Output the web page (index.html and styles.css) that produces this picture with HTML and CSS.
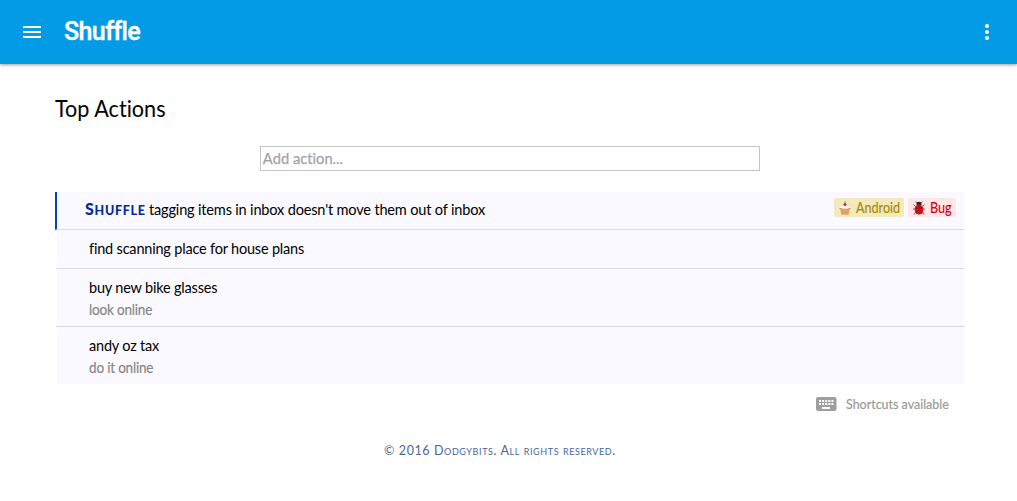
FILE: index.html
```html
<!DOCTYPE html>
<html lang="en">
<head>
<meta charset="utf-8">
<title>Shuffle</title>
<link rel="stylesheet" href="styles.css">
</head>
<body>
<header class="bar">
  <svg class="menu" width="18" height="12" viewBox="0 0 18 12" fill="#fff"><path d="M0 0h18v2H0zM0 5h18v2H0zM0 10h18v2H0z"/></svg>
  <h1 class="brand">Shuffle</h1>
  <svg class="more" width="4" height="16" viewBox="0 0 4 16" fill="#fff"><circle cx="2" cy="2" r="2"/><circle cx="2" cy="8" r="2"/><circle cx="2" cy="14" r="2"/></svg>
</header>
<main class="content">
  <h2 class="title">Top Actions</h2>
  <div class="add"><input class="field" type="text" placeholder="Add action..."></div>
  <ul class="list">
    <li class="row selected">
      <div class="line"><span class="project">S<span class="caps">huffle</span></span><span class="text">tagging items in inbox doesn't move them out of inbox</span></div>
      <div class="tags">
        <span class="tag android">
          <svg width="12" height="14" viewBox="0 0 12 14"><path d="M1 7h10L9.6 13.8H2.4z" fill="#e2a06b"/><path d="M.4 7Q.4 5.4 2.5 5.2Q4 3.6 6 3.6Q8.5 3.6 9.5 5.2Q11.6 5.4 11.6 7Q6 8.3.4 7z" fill="#fff5ec"/><path d="M.3 6.9Q6 8.6 11.7 6.9L11.4 7.8H.6z" fill="#8d6852"/><circle cx="6" cy="3.4" r="1.5" fill="#c5252c"/><path d="M6 2.4L6.3.4" stroke="#744" stroke-width=".7"/></svg>
          <span class="label">Android</span>
        </span>
        <span class="tag bug">
          <svg width="12" height="14" viewBox="0 0 12 14"><path d="M4 2.5L2.7.5M8 2.5L9.3.5M2.5 5.5L.5 3.5M9.5 5.5l2-2M2 8H0M10 8h2M2.7 11L1 13.5M9.3 11l1.7 2.5" stroke="#6b625b" stroke-width="1" fill="none"/><ellipse cx="6" cy="3" rx="2.6" ry="2.2" fill="#2b2423"/><ellipse cx="6" cy="8.6" rx="4.4" ry="5" fill="#d8141f"/><path d="M6 4v9.4" stroke="#5b1015" stroke-width=".4"/><g fill="#4a070b"><circle cx="3.7" cy="6.9" r=".6"/><circle cx="8.3" cy="6.9" r=".6"/><circle cx="4" cy="10.5" r=".6"/><circle cx="8" cy="10.5" r=".6"/></g></svg>
          <span class="label">Bug</span>
        </span>
      </div>
    </li>
    <li class="row"><div class="text">find scanning place for house plans</div></li>
    <li class="row tall"><div class="text">buy new bike glasses</div><div class="note">look online</div></li>
    <li class="row tall last"><div class="text">andy oz tax</div><div class="note">do it online</div></li>
  </ul>
  <div class="shortcuts">
    <svg width="21" height="14" viewBox="0 0 21 14"><rect width="20.5" height="14" rx="2" fill="#9e9e9e"/><path d="M3 3h2v2H3zM6.1 3h2v2h-2zM9.2 3h2v2h-2zM12.3 3h2v2h-2zM15.4 3h2v2h-2zM3 6h2v2H3zM6.1 6h2v2h-2zM9.2 6h2v2h-2zM12.3 6h2v2h-2zM15.4 6h2v2h-2zM6 10h8v2H6z" fill="#fff"/></svg>
    <span class="hint">Shortcuts available</span>
  </div>
</main>
<footer class="foot">© 2016 Dodgybits. All rights reserved.</footer>
</body>
</html>
```
FILE: styles.css
```css
* { box-sizing: border-box; }
body { margin: 0; height: 501px; overflow: hidden; background: #fff; color: #000; font-family: Lato, "Open Sans", sans-serif; font-variant-ligatures: none; }
svg { flex: none; }
.bar { height: 64px; display: flex; align-items: center; padding: 0 28px 0 23px; background: #039be5; box-shadow: 0 1px 3px rgba(0,0,0,.4); }
.brand { margin: 0 auto 0 23px; color: #fff; font: 500 25px/30px Roboto, sans-serif; letter-spacing: -.6px; -webkit-text-stroke: .4px #fff; }
.content { width: 910px; margin-left: 55px; padding-top: 29px; display: flex; flex-direction: column; }
.title { margin: 0; font-size: 24px; line-height: 30px; font-weight: 400; transform: scaleX(.9); transform-origin: 0 50%; }
.add { width: 500px; height: 25px; margin: 23px 0 21px 205px; border: 1px solid #c4c4c4; overflow: hidden; }
.field { display: block; width: 540px; height: 22px; padding: 0 2px; border: 0; outline: 0; background: none; font: 16px/22px Lato, sans-serif; font-variant-ligatures: none; transform: scaleX(.92); transform-origin: 0 50%; }
.field::placeholder { color: #a3a3a3; -webkit-text-stroke: .25px #a3a3a3; }
.list { list-style: none; margin: 0; padding: 0; font-size: 16px; line-height: 20px; }
.row { height: 39px; margin-left: 1px; padding: 8px 8px 0 32.5px; border-bottom: 1px solid #dcdcdc; background: linear-gradient(#faf9ff, #faf9ff) 1px 0 / calc(100% - 2px) 100% no-repeat; white-space: nowrap; }
.selected { height: 38px; margin-left: 0; padding: 6px 9px 0 28px; display: flex; justify-content: space-between; border-left: 2px solid #0645ad; background-position: 0 0; background-size: calc(100% - 1px) 100%; }
.tall { height: 58px; }
.last { border-bottom: 0; height: 57px; }
.line { padding-top: 1px; display: flex; align-items: baseline; }
.project { width: 64px; color: #002da0; font-weight: 900; letter-spacing: .7px; }
.caps { font-size: 12.5px; text-transform: uppercase; }
.text { letter-spacing: -.2px; transform: scaleX(.905); transform-origin: 0 50%; }
.selected .text { transform: scaleX(.91); }
.note { margin-top: 2px; color: #858585; font-size: 15px; letter-spacing: -.2px; transform: scaleX(.9); transform-origin: 0 50%; -webkit-text-stroke: .15px #858585; }
.tags { display: flex; gap: 4px; font-size: 15px; line-height: 19px; }
.tag { display: flex; align-items: center; gap: 5px; height: 19px; padding-left: 5px; border-radius: 2px; }
.label { transform: scaleX(.84); transform-origin: 0 50%; -webkit-text-stroke: .15px currentColor; }
.android { width: 70px; background: #f2e9bd; color: #a78a05; }
.bug { width: 48px; background: #ffe7e8; color: #d00012; }
.shortcuts { display: flex; align-items: center; gap: 9px; margin: 10px 0 0 761px; height: 20px; color: #999; font-size: 14px; white-space: nowrap; }
.hint { margin-top: -2px; transform: scaleX(.89); transform-origin: 0 50%; -webkit-text-stroke: .2px #999; }
.foot { margin: 27px 0 0 384px; color: #4668a0; font-size: 12.5px; line-height: 20px; font-variant-caps: small-caps; letter-spacing: .6px; white-space: nowrap; }
```
